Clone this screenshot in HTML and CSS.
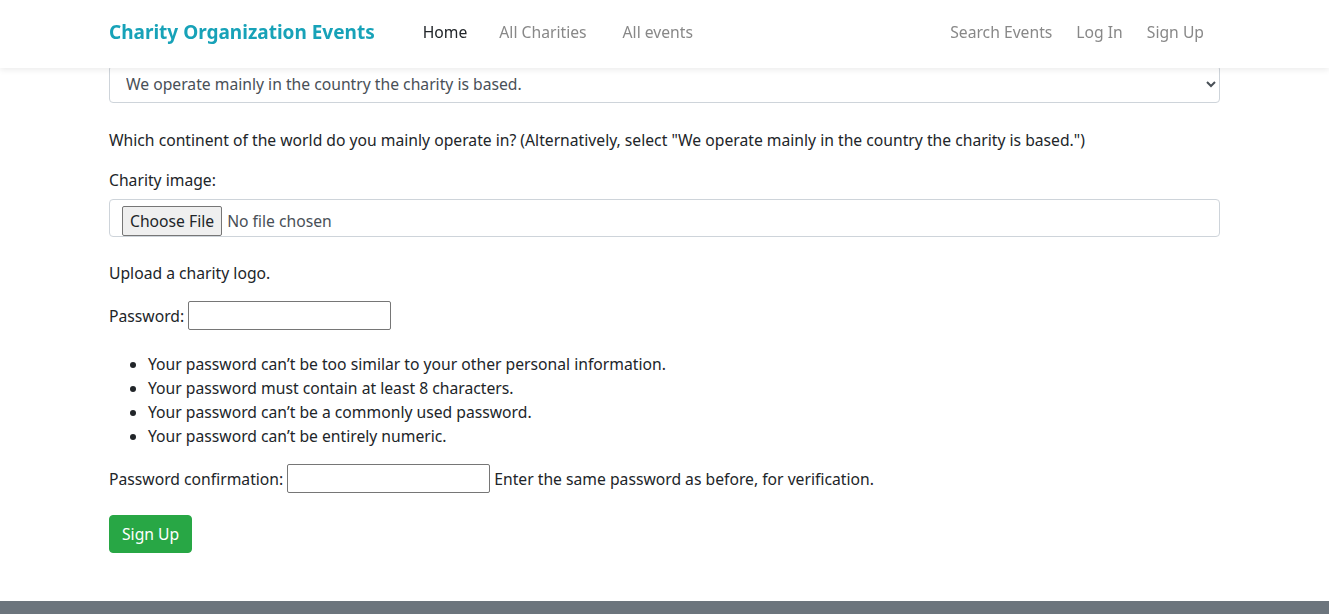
FILE: index.html
```html
<!DOCTYPE html>
<html lang="en">
<head>
<meta charset="utf-8">
<title>Sign Up - Charity Organization Events</title>
<link rel="stylesheet" href="styles.css">
</head>
<body>
<nav class="navbar">
  <div class="container nav-inner">
    <a class="brand" href="#">Charity Organization Events</a>
    <ul class="nav nav-left">
      <li><a class="nav-link active" href="#">Home</a></li>
      <li><a class="nav-link" href="#">All Charities</a></li>
      <li><a class="nav-link" href="#">All events</a></li>
    </ul>
    <ul class="nav nav-right">
      <li><a class="nav-link" href="#">Search Events</a></li>
      <li><a class="nav-link" href="#">Log In</a></li>
      <li><a class="nav-link" href="#">Sign Up</a></li>
    </ul>
  </div>
</nav>
<main class="container content">
  <form class="signup">
    <div class="select-wrap">
      <select class="form-select">
        <option>We operate mainly in the country the charity is based.</option>
      </select>
    </div>
    <p class="help help-continent">Which continent of the world do you mainly operate in? (Alternatively, select "We operate mainly in the country the charity is based.")</p>
    <p class="label">Charity image:</p>
    <div class="file-box">
      <input type="file" class="file-input">
    </div>
    <p class="help help-logo">Upload a charity logo.</p>
    <p class="inline-row row-password"><label>Password:</label> <input type="password" class="text-input"></p>
    <ul class="rules">
      <li>Your password can’t be too similar to your other personal information.</li>
      <li>Your password must contain at least 8 characters.</li>
      <li>Your password can’t be a commonly used password.</li>
      <li>Your password can’t be entirely numeric.</li>
    </ul>
    <p class="inline-row row-confirm"><label>Password confirmation:</label> <input type="password" class="text-input"> <span>Enter the same password as before, for verification.</span></p>
    <button type="button" class="btn-success">Sign Up</button>
  </form>
</main>
<footer class="footer"></footer>
</body>
</html>
```

FILE: styles.css
```css
* { box-sizing: border-box; }
html, body { margin: 0; padding: 0; }
body {
  font-family: "Noto Sans", "Open Sans", sans-serif;
  font-size: 15.7px;
  line-height: 24px;
  color: #212529;
  background: #fff;
}
.container {
  width: 1141px;
  margin: 0 auto;
  padding: 0 15px;
}
.navbar {
  position: fixed;
  top: 0; left: 0; right: 0;
  height: 68px;
  background: #fff;
  box-shadow: 0 2px 6px rgba(0,0,0,0.08);
  z-index: 10;
}
.nav-inner {
  display: flex;
  align-items: center;
  height: 100%;
  padding-bottom: 4px;
}
.brand {
  color: #17a2b8;
  font-size: 19px;
  font-weight: 700;
  text-decoration: none;
  margin-right: 32px;
}
.nav {
  list-style: none;
  margin: 0;
  padding: 0;
  display: flex;
}
.nav-left .nav-link { padding: 8px 16px; }
.nav-left li:last-child .nav-link { padding-left: 20px; }
.nav-right { margin-left: auto; margin-right: 16px; gap: 24px; }
.nav-link {
  color: #888;
  text-decoration: none;
  display: block;
}
.nav-link.active { color: #212529; }

.content { padding-top: 65px; padding-bottom: 48px; }
.signup { display: flex; flex-direction: column; align-items: flex-start; }
.select-wrap { width: 100%; }
.form-select {
  width: 100%;
  height: 38px;
  border: 1px solid #ced4da;
  border-radius: 4px;
  padding: 0 12px;
  font: inherit;
  color: #495057;
  background: #fff;
}
p { margin: 0; }
.help-continent { margin-top: 25px; }
.label { margin-top: 16px; }
.file-box {
  width: 100%;
  height: 38px;
  margin-top: 7px;
  border: 1px solid #ced4da;
  border-radius: 4px;
  padding: 6px 12px 0;
  display: flex;
  align-items: flex-start;
}
.file-input {
  font: inherit;
  color: #495057;
}
.file-input::file-selector-button {
  font: inherit;
  color: #212529;
  height: 30px;
  padding: 0 7px;
  margin-right: 5px;
  background: #efefef;
  border: 1px solid #767676;
  border-radius: 2px;
}
.help-logo { margin-top: 24px; }
.inline-row { display: flex; align-items: center; gap: 4px; }
.row-password { margin-top: 16px; }
.text-input {
  width: 203px;
  height: 29px;
  border: 1px solid #767676;
  border-radius: 2px;
  font: inherit;
  padding: 0 4px;
}
.rules {
  margin: 22px 0 0;
  padding-left: 39px;
}
.row-confirm { margin-top: 16px; }
.btn-success {
  margin-top: 22px;
  height: 38px;
  padding: 0 12px;
  background: #28a745;
  color: #fff;
  border: 1px solid #28a745;
  border-radius: 4px;
  font: inherit;
  cursor: pointer;
}
.footer {
  height: 60px;
  background: #6c757d;
}
```
